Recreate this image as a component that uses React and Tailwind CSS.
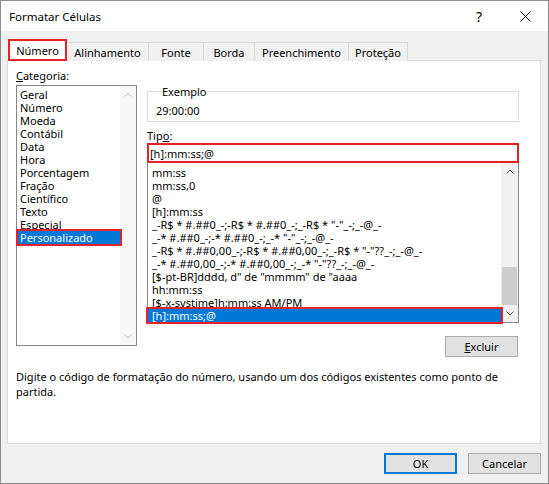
import React from "react";

const categorias = [
  "Geral",
  "Número",
  "Moeda",
  "Contábil",
  "Data",
  "Hora",
  "Porcentagem",
  "Fração",
  "Científico",
  "Texto",
  "Especial",
  "Personalizado",
];

const tipos = [
  "mm:ss",
  "mm:ss,0",
  "@",
  "[h]:mm:ss",
  '_-R$ * #.##0_-;-R$ * #.##0_-;_-R$ * "-"_-;_-@_-',
  '_-* #.##0_-;-* #.##0_-;_-* "-"_-;_-@_-',
  '_-R$ * #.##0,00_-;-R$ * #.##0,00_-;_-R$ * "-"??_-;_-@_-',
  '_-* #.##0,00_-;-* #.##0,00_-;_-* "-"??_-;_-@_-',
  '[$-pt-BR]dddd, d" de "mmmm" de "aaaa',
  "hh:mm:ss",
  "[$-x-systime]h:mm:ss AM/PM",
  "[h]:mm:ss;@",
];

const tabs = [
  { label: "Número", w: "w-[59px]" },
  { label: "Alinhamento", w: "w-[83px]" },
  { label: "Fonte", w: "w-[56px]" },
  { label: "Borda", w: "w-[52px]" },
  { label: "Preenchimento", w: "w-[95px]" },
  { label: "Proteção", w: "w-[60px]" },
];

const Chevron = ({ up, color }) => (
  <svg width="8" height="5" viewBox="0 0 8 5">
    <polyline
      points={up ? "0.5,4.5 4,1 7.5,4.5" : "0.5,0.5 4,4 7.5,0.5"}
      fill="none"
      stroke={color}
      strokeWidth="1"
    />
  </svg>
);

const Tab = ({ label, w, active }) =>
  active ? (
    <div
      className={`${w} h-[22px] -mb-px bg-white border-2 border-[#e3222a] flex items-center justify-center relative z-10`}
    >
      {label}
    </div>
  ) : (
    <div
      className={`${w} h-[19px] -mb-px -ml-px bg-[#f0f0f0] border border-b-0 border-[#d9d9d9] flex items-center justify-center`}
    >
      {label}
    </div>
  );

export default function App() {
  return (
    <div className="w-[549px] h-[484px] bg-[#f0f0f0] border border-[#8c8c8c] flex flex-col font-['Noto_Sans',sans-serif] text-[11px] leading-[15px] text-black">
      {/* barra de título */}
      <div className="h-[30px] shrink-0 bg-white flex items-center pl-[8px]">
        <span className="flex-1 text-[11.5px]">Formatar Células</span>
        <span className="w-[46px] text-center text-[14px]">?</span>
        <span className="w-[46px] flex justify-center">
          <svg width="11" height="11" viewBox="0 0 11 11">
            <path d="M0.5 0.5 L10.5 10.5 M10.5 0.5 L0.5 10.5" stroke="#111" strokeWidth="1" />
          </svg>
        </span>
      </div>

      {/* abas */}
      <div className="h-[29px] shrink-0 flex items-end pl-[7px] relative z-10">
        {tabs.map((t, i) => (
          <Tab key={t.label} label={t.label} w={t.w} active={i === 0} />
        ))}
      </div>

      {/* painel */}
      <div className="ml-[6px] w-[534px] h-[384px] shrink-0 bg-white border border-[#d9d9d9] pl-[8px] pt-[7px] flex flex-col">
        <div className="flex gap-[10px]">
          {/* categoria */}
          <div className="w-[121px] flex flex-col">
            <div>
              <span className="underline">C</span>ategoria:
            </div>
            <div className="mt-[2px] h-[261px] border border-[#828790] flex">
              <div className="flex-1 pt-[2px] pl-[1px]">
                {categorias.map((c) =>
                  c === "Personalizado" ? (
                    <div
                      key={c}
                      className="h-[13px] leading-[13px] pl-[2px] bg-[#0078d7] text-white outline-2 outline-[#e3222a] relative z-10"
                    >
                      {c}
                    </div>
                  ) : (
                    <div key={c} className="h-[13px] leading-[13px] pl-[2px]">
                      {c}
                    </div>
                  )
                )}
              </div>
              <div className="w-[16px] bg-[#f7f7f7] flex flex-col justify-between items-center py-[6px]">
                <Chevron up color="#c4c4c4" />
                <Chevron color="#c4c4c4" />
              </div>
            </div>
          </div>

          {/* exemplo e tipo */}
          <div className="w-[372px] flex flex-col">
            <fieldset className="mt-[16px] h-[38px] border border-[#dcdcdc] pl-[8px]">
              <legend className="ml-[5px] px-[1px] leading-[15px]">Exemplo</legend>
              <div className="pt-[4px]">29:00:00</div>
            </fieldset>

            <div className="mt-[6px]">
              Tip<span className="underline">o</span>:
            </div>
            <div className="h-[20px] border-2 border-[#e3222a] pl-[1px] flex items-center relative z-10">
              [h]:mm:ss;@
            </div>
            <div className="h-[160px] border border-[#828790] border-t-0 flex">
              <div className="flex-1 pt-[3px]">
                {tipos.map((t, i) =>
                  i === tipos.length - 1 ? (
                    <div
                      key={i}
                      className="h-[13px] leading-[13px] pl-[4px] bg-[#0078d7] text-white outline-2 outline-[#e3222a] relative z-10 whitespace-pre"
                    >
                      {t}
                    </div>
                  ) : (
                    <div key={i} className="h-[13px] leading-[13px] pl-[4px] whitespace-pre">
                      {t}
                    </div>
                  )
                )}
              </div>
              <div className="w-[17px] bg-[#f0f0f0] flex flex-col">
                <div className="h-[17px] flex items-center justify-center">
                  <Chevron up color="#606060" />
                </div>
                <div className="flex-1 flex flex-col justify-end px-[1px]">
                  <div className="h-[38px] bg-[#cdcdcd]" />
                </div>
                <div className="h-[17px] flex items-center justify-center">
                  <Chevron color="#606060" />
                </div>
              </div>
            </div>

            <div className="mt-[13px] flex justify-end pr-[1px]">
              <button className="w-[73px] h-[21px] bg-[#e1e1e1] border border-[#adadad]">
                <span className="underline">E</span>xcluir
              </button>
            </div>
          </div>
        </div>

        <p className="mt-[12px] whitespace-nowrap">
          Digite o código de formatação do número, usando um dos códigos existentes como ponto de
          <br />
          partida.
        </p>
      </div>

      {/* botões */}
      <div className="mt-[9px] flex justify-end gap-[11px] pr-[7px]">
        <button className="w-[73px] h-[21px] bg-[#e1e1e1] border-2 border-[#0078d7]">OK</button>
        <button className="w-[73px] h-[21px] bg-[#e1e1e1] border border-[#adadad]">Cancelar</button>
      </div>
    </div>
  );
}
